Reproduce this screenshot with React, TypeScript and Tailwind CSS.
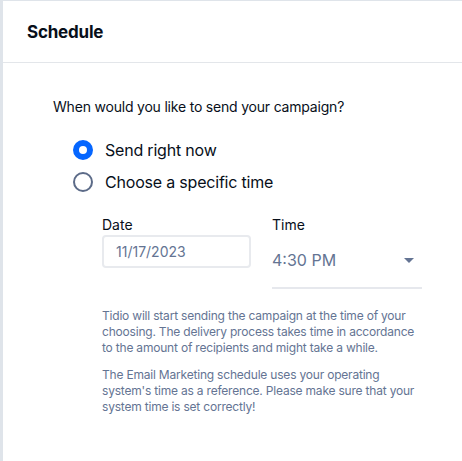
const App = () => {
    return (
        <div className="w-[462px] h-[461px] flex bg-[#dfe4ea] font-['Inter',sans-serif] overflow-hidden">
            <div className="ml-[3px] mt-px flex-1 bg-white flex flex-col">
                <div className="h-[62px] flex items-center px-[24px] pt-[3px] border-b border-[#e3e6ea]">
                    <h2 className="text-[17px] font-bold text-[#080f1a] tracking-[-0.2px]">Schedule</h2>
                </div>
                <div className="pl-[50px] pt-[33px]">
                    <p className="text-[14px] text-[#080f1a] tracking-[-0.2px]">When would you like to send your campaign?</p>
                    <div className="mt-[21px] ml-[20px] flex flex-col gap-[8px]">
                        <label className="flex items-center gap-[12px] text-[16px] text-[#080f1a] tracking-[-0.2px]">
                            <span className="w-[20px] h-[20px] rounded-full border-[6px] border-[#0566ff] bg-white"></span>
                            Send right now
                        </label>
                        <label className="flex items-center gap-[12px] text-[16px] text-[#080f1a] tracking-[-0.2px]">
                            <span className="w-[20px] h-[20px] rounded-full border-2 border-[#5c6b88] bg-white"></span>
                            Choose a specific time
                        </label>
                    </div>
                    <div className="ml-[49px] mt-[22px] flex gap-[21px]">
                        <div className="flex flex-col">
                            <span className="text-[14px] text-[#080f1a] leading-[18px]">Date</span>
                            <div className="mt-[1px] w-[149px] h-[33px] border-2 border-[#e8eaee] rounded-[4px] flex items-center pl-[12px] text-[14px] text-[#647493]">
                                11/17/2023
                            </div>
                        </div>
                        <div className="flex flex-col w-[150px]">
                            <span className="text-[14px] text-[#080f1a] leading-[18px]">Time</span>
                            <div className="h-[55px] flex items-start justify-between border-b-2 border-[#e6e8ed] text-[16px] leading-[24px] text-[#647493] pt-[14px]">
                                4:30 PM
                                <svg width="10" height="5" viewBox="0 0 10 5" className="mr-[8px] mt-[10px]"><path d="M0 0h10L5 5z" fill="#647493" /></svg>
                            </div>
                        </div>
                    </div>
                    <div className="ml-[49px] mt-[19px] w-[318px] text-[12px] leading-[16px] tracking-[-0.2px] text-[#647493] flex flex-col gap-[11px]">
                        <p>Tidio will start sending the campaign at the time of your choosing. The delivery process takes time in accordance to the amount of recipients and might take a while.</p>
                        <p>The Email Marketing schedule uses your operating system's time as a reference. Please make sure that your system time is set correctly!</p>
                    </div>
                </div>
            </div>
        </div>
    )
}

export default App
